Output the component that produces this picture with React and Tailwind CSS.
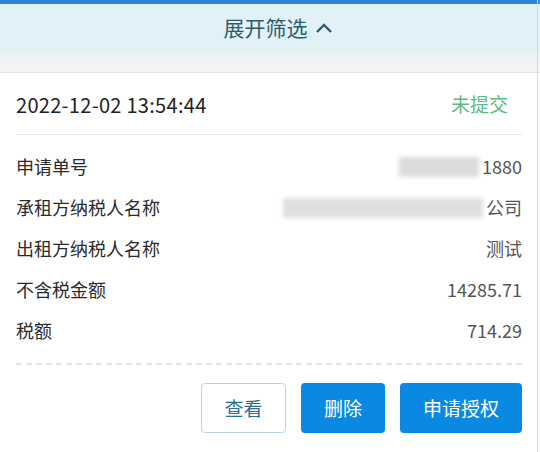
import React from "react";

export default function App() {
  const rows = [
    { label: "申请单号", value: "1880", blur: "w-[80px]", shade: "bg-[#dcdcdc]" },
    { label: "承租方纳税人名称", value: "公司", blur: "w-[200px]", shade: "bg-[#e0e0e0]" },
    { label: "出租方纳税人名称", value: "测试" },
    { label: "不含税金额", value: "14285.71" },
    { label: "税额", value: "714.29" },
  ];
  return (
    <div
      className="w-[540px] h-[452px] bg-white overflow-hidden relative"
      style={{ fontFamily: '"Noto Sans CJK SC", "Noto Sans", sans-serif' }}
    >
      <div className="h-[4px] bg-[#2a88d2]" />
      <div className="h-[46px] bg-[#e2f0f8] flex items-center justify-center gap-[7px] pl-[16px] text-[#2d5d6a] text-[21px]">
        <span className="leading-none">展开筛选</span>
        <svg width="18" height="12" viewBox="0 0 18 12" fill="none" className="mt-[1px]">
          <path d="M2 10 L9 3 L16 10" stroke="#2d5d6a" strokeWidth="2.4" />
        </svg>
      </div>
      <div className="h-[23px] bg-gradient-to-b from-[#e8f1f5] to-[#f5f4f4] border-b border-[#e3e3e3]" />
      <div className="px-[16px] pr-[18px]">
        <div className="h-[62px] flex items-center justify-between border-b border-[#e6e6e6] pr-[14px]">
          <span className="text-[20px] text-[#222] tracking-[0.3px] mt-[2px]">2022-12-02 13:54:44</span>
          <span className="text-[19px] text-[#5fba80] mt-[2px]">未提交</span>
        </div>
        <div className="pt-[11px] flex flex-col">
          {rows.map((r) => (
            <div key={r.label} className="h-[41px] flex items-center justify-between text-[18px]">
              <span className="text-[#2a2a2a]">{r.label}</span>
              <span className="flex items-center text-[#555]">
                {r.blur && (
                  <span className={`${r.blur} ${r.shade} h-[20px] blur-[2px] mr-[3px]`} />
                )}
                {r.value}
              </span>
            </div>
          ))}
        </div>
        <div className="mt-[12px] border-t-2 border-dashed border-[#e4e4e4]" />
        <div className="flex justify-end gap-[15px] pt-[18px]">
          <button className="w-[85px] h-[50px] rounded-[4px] border border-[#b8d6de] bg-white text-[#2a6f92] text-[19px]">
            查看
          </button>
          <button className="w-[84px] h-[50px] rounded-[4px] bg-[#0a89e3] text-white text-[19px]">
            删除
          </button>
          <button className="w-[122px] h-[50px] rounded-[4px] bg-[#0a89e3] text-white text-[19px]">
            申请授权
          </button>
        </div>
      </div>
      <div className="absolute top-0 right-[2px] w-[1px] h-full bg-[#d8d8d8]" />
    </div>
  );
}
